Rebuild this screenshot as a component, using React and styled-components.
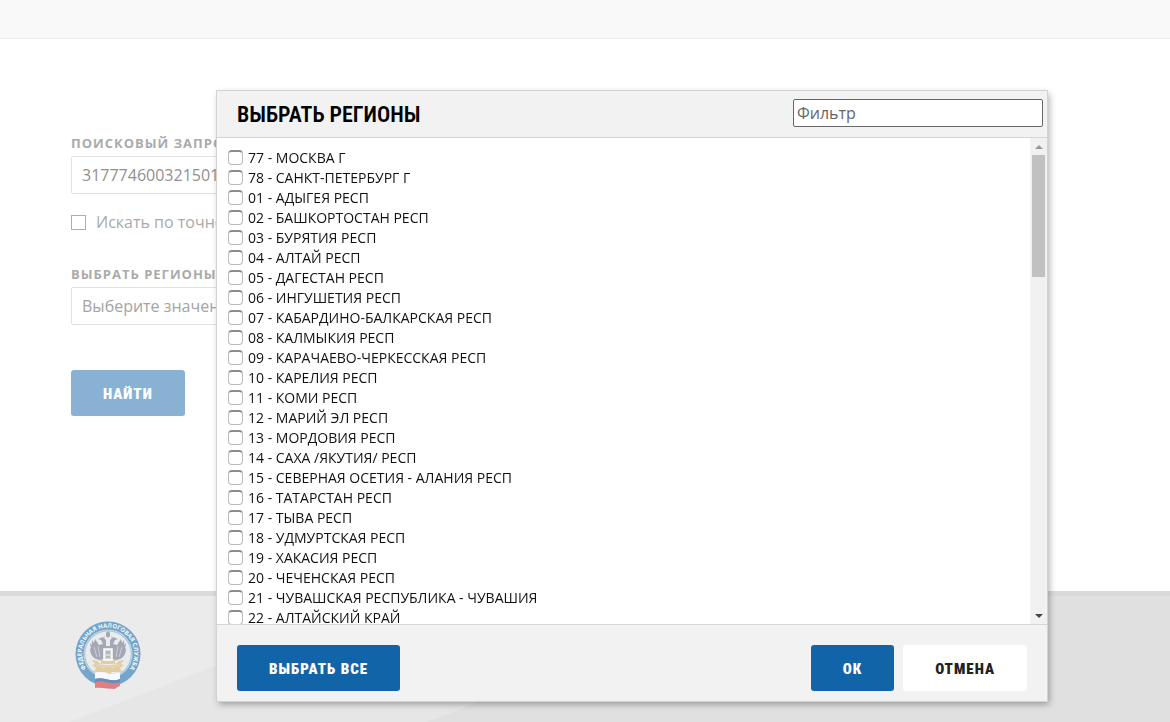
import styled, { createGlobalStyle } from "styled-components"

const regions = [
    '77 - МОСКВА Г',
    '78 - САНКТ-ПЕТЕРБУРГ Г',
    '01 - АДЫГЕЯ РЕСП',
    '02 - БАШКОРТОСТАН РЕСП',
    '03 - БУРЯТИЯ РЕСП',
    '04 - АЛТАЙ РЕСП',
    '05 - ДАГЕСТАН РЕСП',
    '06 - ИНГУШЕТИЯ РЕСП',
    '07 - КАБАРДИНО-БАЛКАРСКАЯ РЕСП',
    '08 - КАЛМЫКИЯ РЕСП',
    '09 - КАРАЧАЕВО-ЧЕРКЕССКАЯ РЕСП',
    '10 - КАРЕЛИЯ РЕСП',
    '11 - КОМИ РЕСП',
    '12 - МАРИЙ ЭЛ РЕСП',
    '13 - МОРДОВИЯ РЕСП',
    '14 - САХА /ЯКУТИЯ/ РЕСП',
    '15 - СЕВЕРНАЯ ОСЕТИЯ - АЛАНИЯ РЕСП',
    '16 - ТАТАРСТАН РЕСП',
    '17 - ТЫВА РЕСП',
    '18 - УДМУРТСКАЯ РЕСП',
    '19 - ХАКАСИЯ РЕСП',
    '20 - ЧЕЧЕНСКАЯ РЕСП',
    '21 - ЧУВАШСКАЯ РЕСПУБЛИКА - ЧУВАШИЯ',
    '22 - АЛТАЙСКИЙ КРАЙ',
]

const Emblem = () => (
    <svg width="66" height="70" viewBox="0 0 66 70" role="img" aria-label="ФНС">
        <defs>
            <path id="ring" d="M13 50.800 A26.200 26.200 0 1 1 53 50.800" />
        </defs>
        <circle cx="33" cy="34" r="32.500" fill="#74a5ca" />
        <circle cx="33" cy="34" r="24.500" fill="#c4d8e6" />
        <circle cx="33" cy="34" r="23.500" fill="#74a5ca" opacity=".5" />
        <circle cx="33" cy="34" r="22.800" fill="#e9ebed" />
        <text fontFamily="Open Sans, sans-serif" fontSize="6" fontWeight="700" fill="#f3f8fb">
            <textPath href="#ring" startOffset="50%" textAnchor="middle">ФЕДЕРАЛЬНАЯ НАЛОГОВАЯ СЛУЖБА</textPath>
        </text>
        <g fill="#a4a7b4">
            <path d="M31 20 28 17l-5 2 3 1 2 4-4 1-4-6-1 4-2-3 0 5-2-2 1 6-1-1c0 5 2 9 6 11l7 2 5-4 5 4 7-2c4-2 6-6 6-11l-1 1 1-6-2 2 0-5-2 3-1-4-4 6-4-1 2-4 3-1-5-2-3 3 0 6h-4z" />
            <path d="M31 16v-3l2-2 2 2v3l-2 2z" />
        </g>
        <path d="M19 27l3 10M23 26l2 11M47 27l-3 10M43 26l-2 11" stroke="#cdd0d7" strokeWidth="1" />
        <g fill="#e3cda2">
            <path d="M22 41l-5-1 3 4-3 1 4 3-2 4h12l2 2h2l2-2h10l-2-4 4-3-3-1 3-4-5 1-5 4H27z" />
            <path d="M26 39h14v5H26zM28 17l2-1v2zM38 17l-2-1v2z" />
        </g>
        <path d="M21 46l4-2 3 4 5-3 5 3 3-4 4 2" fill="none" stroke="#eee0c4" strokeWidth="1" />
        <path d="M29 29h8v11h-8z" fill="#d7d9dc" stroke="#fff" strokeWidth="1.500" />
        <path d="M31 31h4v3h-4zM31 36h4v2h-4z" fill="#b5b7bf" />
        <path d="M20 53c8-3 16 4 25 0v6c-9 4-17-3-25 0z" fill="#fafafa" />
        <path d="M20 59c8-3 16 4 25 0v5c-9 4-17-4-25 0z" fill="#668fb8" />
        <path d="M20 62c8-3 16 4 25 0v4c-3 1-4 2-5 3-7 0-13-2-20-1z" fill="#df7f83" />
    </svg>
)

const App = () => {
    return (
        <>
            <GlobalStyle />
            <Page>
                <TopBar />
                <Main>
                    <Label htmlFor="query">Поисковый запрос</Label>
                    <TextInput id="query" type="text" defaultValue="317774600321501" />
                    <Exact>
                        <input type="checkbox" />
                        Искать по точному
                    </Exact>
                    <Label htmlFor="regions">Выбрать регионы</Label>
                    <TextInput id="regions" type="text" placeholder="Выберите значение" />
                    <SearchButton type="button">Найти</SearchButton>
                </Main>
                <Footer>
                    <Emblem />
                </Footer>
            </Page>
            <Overlay>
                <Dialog role="dialog" aria-labelledby="dialog-title">
                    <DialogHeader>
                        <h2 id="dialog-title">Выбрать регионы</h2>
                        <FilterInput type="text" placeholder="Фильтр" aria-label="Фильтр" />
                    </DialogHeader>
                    <DialogBody>
                        <RegionList>
                            {regions.map((region) => (
                                <li key={region}>
                                    <RegionLabel>
                                        <input type="checkbox" />
                                        {region}
                                    </RegionLabel>
                                </li>
                            ))}
                        </RegionList>
                        <ScrollTrack>
                            <Arrow />
                            <Thumb />
                            <Arrow $down />
                        </ScrollTrack>
                    </DialogBody>
                    <DialogFooter>
                        <Button type="button">Выбрать все</Button>
                        <ButtonGroup>
                            <Button type="button">ОК</Button>
                            <Button type="button" $light>Отмена</Button>
                        </ButtonGroup>
                    </DialogFooter>
                </Dialog>
            </Overlay>
        </>
    )
}

const GlobalStyle = createGlobalStyle`
    * {
        box-sizing: border-box;
    }
    body {
        margin: 0;
        background: #fff;
        font-family: "Open Sans", sans-serif;
        color: #111;
    }
    button, input {
        font-family: inherit;
        font-weight: inherit;
    }
`

const Page = styled.div`
    display: flex;
    flex-direction: column;
    height: 100vh;
    overflow: hidden;
`

const TopBar = styled.header`
    flex: none;
    height: 39px;
    background: #f9f9f9;
    border-bottom: 1px solid #ebebeb;
`

const Main = styled.main`
    flex: 1;
    display: flex;
    flex-direction: column;
    align-items: flex-start;
    width: 70%;
    padding: 94px 71px 0;
`

const Label = styled.label`
    font-size: 13px;
    font-weight: 700;
    line-height: 20px;
    margin-bottom: 3px;
    letter-spacing: 1px;
    text-transform: uppercase;
    color: #aaa;
`

const TextInput = styled.input`
    width: 100%;
    height: 38px;
    padding: 0 10px;
    border: 1px solid #e2e2e2;
    border-radius: 2px;
    font-size: 16px;
    color: #909090;
    &::placeholder {
        color: #a4a4a4;
        opacity: 1;
    }
`

const Exact = styled.label`
    display: flex;
    align-items: center;
    gap: 10px;
    margin: 16px 0 30px;
    font-size: 16px;
    line-height: 24px;
    color: #aaa;
    input {
        appearance: none;
        width: 15px;
        height: 15px;
        margin: 0;
        border: 1px solid #8fb4cc;
        background: #fff;
    }
`

const Button = styled.button`
    height: 46px;
    padding: 2px 32px 0;
    border: none;
    border-radius: 3px;
    background: ${({ $light }) => ($light ? '#fff' : '#1264a9')};
    color: ${({ $light }) => ($light ? '#222' : '#fff')};
    font-family: "Roboto Condensed", "Liberation Sans Narrow", sans-serif;
    font-size: 15px;
    font-weight: 900;
    letter-spacing: 1px;
    text-transform: uppercase;
    cursor: pointer;
`

const SearchButton = styled(Button)`
    margin-top: 45px;
    background: #88b1d4;
`

const Footer = styled.footer`
    flex: none;
    height: 131px;
    padding: 24px 75px 0;
    border-top: 5px solid #dadada;
    background: linear-gradient(159deg, #ebebeb 0 142px, #e6e6e6 143px 270px, #e0e0e0 271px);
`

const Overlay = styled.div`
    position: fixed;
    inset: 0;
    padding: 91px 123px 21px 217px;
`

const Dialog = styled.section`
    display: flex;
    flex-direction: column;
    height: 100%;
    background: #fff;
    outline: 1px solid #d2d2d2;
    box-shadow: 2px 3px 7px rgba(0, 0, 0, .35);
`

const DialogHeader = styled.header`
    flex: none;
    display: flex;
    align-items: center;
    justify-content: space-between;
    height: 47px;
    padding: 0 4px 2px 20px;
    background: #f2f2f2;
    border-bottom: 1px solid #d6d6d6;
    h2 {
        margin: 2px 0 0;
        font-family: "Roboto Condensed", "Liberation Sans Narrow", sans-serif;
        font-size: 22px;
        font-weight: 600;
        text-transform: uppercase;
        color: #000;
    }
`

const FilterInput = styled.input`
    width: 250px;
    height: 28px;
    padding: 0 3px;
    border: 1px solid #666;
    border-radius: 2px;
    font-size: 16px;
    &::placeholder {
        color: #666;
        opacity: 1;
    }
`

const DialogBody = styled.div`
    flex: 1;
    display: flex;
    min-height: 0;
`

const RegionList = styled.ul`
    flex: 1;
    margin: 0;
    padding: 10px 11px 0;
    overflow: hidden;
    list-style: none;
`

const RegionLabel = styled.label`
    display: flex;
    align-items: center;
    gap: 5px;
    height: 20px;
    font-size: 14px;
    line-height: 20px;
    input {
        appearance: none;
        width: 15px;
        height: 15px;
        margin: 0 0 1px;
        border: 1px solid #bbb;
        border-top: 2px solid #8c8c8c;
        border-radius: 4px;
        background: #fff;
    }
`

const ScrollTrack = styled.div`
    flex: none;
    display: flex;
    flex-direction: column;
    align-items: center;
    width: 17px;
    background: #f1f1f1;
`

const Arrow = styled.span`
    width: 100%;
    height: 17px;
    margin-top: ${({ $down }) => ($down ? 'auto' : '0')};
    display: grid;
    place-items: center;
    &::before {
        content: "";
        border: 4px solid transparent;
        border-width: ${({ $down }) => ($down ? '4px 4px 0' : '0 4px 4px')};
        border-color: ${({ $down }) => ($down ? '#444 transparent' : 'transparent transparent #999')};
    }
`

const Thumb = styled.span`
    width: 13px;
    height: 25%;
    background: #c1c1c1;
`

const DialogFooter = styled.footer`
    flex: none;
    display: flex;
    align-items: center;
    justify-content: space-between;
    height: 77px;
    padding: 10px 20px 0;
    background: #f2f2f2;
    border-top: 1px solid #d6d6d6;
`

const ButtonGroup = styled.div`
    display: flex;
    gap: 9px;
`

export default App
